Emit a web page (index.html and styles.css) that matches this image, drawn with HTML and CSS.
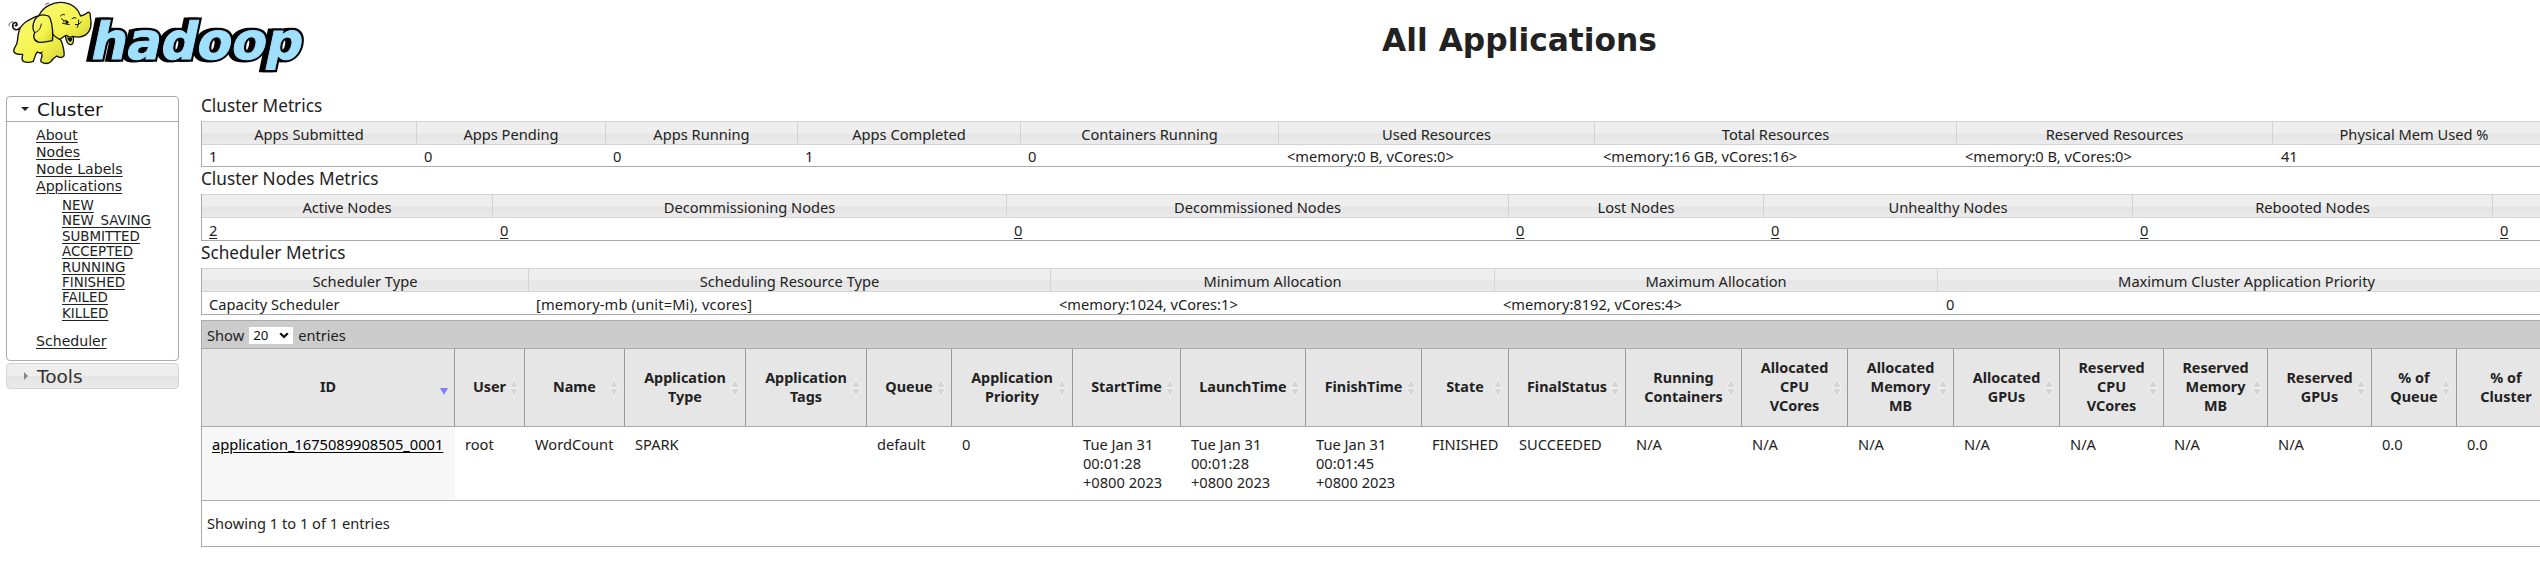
FILE: index.html
```html
<!DOCTYPE html>
<html lang="en">
<head>
<meta charset="utf-8">
<title>All Applications</title>
<link rel="stylesheet" href="styles.css">
</head>
<body>
<svg class="defs" width="0" height="0">
  <symbol id="sort" viewBox="0 0 10 18">
    <path d="M5 .7 9.3 8.3H.7zM5 17.3 9.3 9.7H.7z" fill="#d4d4d4" stroke="#fafafa" stroke-width=".9" stroke-dasharray="1.4 .5"/>
  </symbol>
</svg>
<header class="header">
  <svg class="logo" width="320" height="80" viewBox="0 0 320 80" role="img" aria-label="hadoop">
    <defs>
      <linearGradient id="skin" x1="0" y1="0" x2="1" y2="1">
        <stop offset="0" stop-color="#fafa78"/><stop offset=".6" stop-color="#f4f44c"/><stop offset="1" stop-color="#d2d034"/>
      </linearGradient>
    </defs>
    <g class="wordmark" transform="translate(89 58.5) skewX(-12)">
      <g class="wordmark-shadow">
        <text x="-4" y="0" textLength="211" lengthAdjust="spacingAndGlyphs">hadoop</text>
        <text x="0" y="0" textLength="211" lengthAdjust="spacingAndGlyphs">hadoop</text>
      </g>
      <text class="wordmark-face" x="0" y="0" textLength="211" lengthAdjust="spacingAndGlyphs">hadoop</text>
    </g>
    <g transform="scale(.3333)" stroke="#111" stroke-width="4" stroke-linejoin="round" stroke-linecap="round" fill="none">
      <path d="M60 84C50 94 38 88 38 77C38 68 46 65 50 70C53 75 49 79 46 76" stroke-width="5"/>
      <path d="M27 77Q25 70 31 68M33 67l5-2M136 15Q138 8 146 9" stroke-width="2"/>
      <path fill="url(#skin)" d="M112 48C90 58 66 68 58 90C52 108 54 122 50 132C46 142 38 148 42 156C48 164 58 164 68 163C68 172 62 178 70 184C80 188 92 187 100 184C104 174 106 162 112 156C120 160 124 158 126 164C128 174 118 180 124 186C134 192 146 190 152 186C156 178 164 172 170 168C178 174 188 174 192 168C194 156 190 142 186 128L150 60Z"/>
      <path fill="url(#skin)" d="M196 106C198 122 204 135 214 134C222 130 222 116 218 106Z"/>
      <path fill="url(#skin)" d="M116 48C128 20 160 4 192 8C220 12 236 30 242 48C250 46 258 42 262 38C268 34 272 40 271 50C276 74 274 92 258 104C246 112 232 113 218 109C212 112 204 111 200 106C192 106 188 116 178 118C170 112 158 108 156 96Z"/>
      <path fill="#111" d="M202 114Q212 112 216 114Q218 122 210 126Q204 122 202 114Z" stroke-width="1"/>
      <path fill="url(#skin)" d="M138 46C126 42 110 46 104 60C98 74 96 88 104 98C98 110 102 124 118 127C136 128 148 122 157 122C160 108 158 74 150 54Q146 46 138 46Z"/>
      <path d="M104 98C114 96 122 86 124 72M128 156Q120 162 112 157M190 66Q198 54 204 68M188 70L208 74M192 62L184 56M181 48Q186 40 194 44M216 56Q222 50 228 54M226 74Q236 78 244 66M232 82Q238 74 236 60" stroke-width="3"/>
      <path d="M196 66Q202 58 206 68L200 72Z" fill="#111" stroke-width="1"/>
    </g>
  </svg>
  <h1 class="title">All Applications</h1>
</header>
<div class="layout">
  <nav class="sidebar">
    <section class="panel open">
      <h3 class="panel-head"><i class="arrow-down"></i>Cluster</h3>
      <ul class="links">
        <li><a>About</a></li>
        <li><a>Nodes</a></li>
        <li><a>Node Labels</a></li>
        <li><a>Applications</a>
          <ul class="sublinks">
            <li><a>NEW</a></li>
            <li><a>NEW_SAVING</a></li>
            <li><a>SUBMITTED</a></li>
            <li><a>ACCEPTED</a></li>
            <li><a>RUNNING</a></li>
            <li><a>FINISHED</a></li>
            <li><a>FAILED</a></li>
            <li><a>KILLED</a></li>
          </ul>
        </li>
        <li><a>Scheduler</a></li>
      </ul>
    </section>
    <section class="panel closed">
      <h3 class="panel-head"><i class="arrow-right"></i>Tools</h3>
    </section>
  </nav>
  <main class="content">
    <h2 class="section">Cluster Metrics</h2>
    <div class="metrics cluster">
      <div class="head"><span>Apps Submitted</span><span>Apps Pending</span><span>Apps Running</span><span>Apps Completed</span><span>Containers Running</span><span>Used Resources</span><span>Total Resources</span><span>Reserved Resources</span><span>Physical Mem Used %</span></div>
      <div class="vals"><span>1</span><span>0</span><span>0</span><span>1</span><span>0</span><span>&lt;memory:0 B, vCores:0&gt;</span><span>&lt;memory:16 GB, vCores:16&gt;</span><span>&lt;memory:0 B, vCores:0&gt;</span><span>41</span></div>
    </div>
    <h2 class="section">Cluster Nodes Metrics</h2>
    <div class="metrics nodes">
      <div class="head"><span>Active Nodes</span><span>Decommissioning Nodes</span><span>Decommissioned Nodes</span><span>Lost Nodes</span><span>Unhealthy Nodes</span><span>Rebooted Nodes</span><span></span></div>
      <div class="vals"><a>2</a><a>0</a><a>0</a><a>0</a><a>0</a><a>0</a><a>0</a></div>
    </div>
    <h2 class="section">Scheduler Metrics</h2>
    <div class="metrics scheduler">
      <div class="head"><span>Scheduler Type</span><span>Scheduling Resource Type</span><span>Minimum Allocation</span><span>Maximum Allocation</span><span>Maximum Cluster Application Priority</span></div>
      <div class="vals"><span>Capacity Scheduler</span><span class="wide">[memory-mb (unit=Mi), vcores]</span><span>&lt;memory:1024, vCores:1&gt;</span><span>&lt;memory:8192, vCores:4&gt;</span><span>0</span></div>
    </div>
    <div class="apps">
      <div class="toolbar">Show <span class="select">20<svg width="10" height="7" viewBox="0 0 10 7"><path d="M1.2 1.2 5 5 8.8 1.2" fill="none" stroke="#111" stroke-width="2.2"/></svg></span> entries</div>
      <div class="app-head">
        <div>ID<i class="sorted"></i></div>
        <div>User<svg class="sort"><use href="#sort"/></svg></div>
        <div>Name<svg class="sort"><use href="#sort"/></svg></div>
        <div>Application<br>Type<svg class="sort"><use href="#sort"/></svg></div>
        <div>Application<br>Tags<svg class="sort"><use href="#sort"/></svg></div>
        <div>Queue<svg class="sort"><use href="#sort"/></svg></div>
        <div>Application<br>Priority<svg class="sort"><use href="#sort"/></svg></div>
        <div>StartTime<svg class="sort"><use href="#sort"/></svg></div>
        <div>LaunchTime<svg class="sort"><use href="#sort"/></svg></div>
        <div>FinishTime<svg class="sort"><use href="#sort"/></svg></div>
        <div>State<svg class="sort"><use href="#sort"/></svg></div>
        <div>FinalStatus<svg class="sort"><use href="#sort"/></svg></div>
        <div>Running<br>Containers<svg class="sort"><use href="#sort"/></svg></div>
        <div>Allocated<br>CPU<br>VCores<svg class="sort"><use href="#sort"/></svg></div>
        <div>Allocated<br>Memory<br>MB<svg class="sort"><use href="#sort"/></svg></div>
        <div>Allocated<br>GPUs<svg class="sort"><use href="#sort"/></svg></div>
        <div>Reserved<br>CPU<br>VCores<svg class="sort"><use href="#sort"/></svg></div>
        <div>Reserved<br>Memory<br>MB<svg class="sort"><use href="#sort"/></svg></div>
        <div>Reserved<br>GPUs<svg class="sort"><use href="#sort"/></svg></div>
        <div>% of<br>Queue<svg class="sort"><use href="#sort"/></svg></div>
        <div>% of<br>Cluster<svg class="sort"><use href="#sort"/></svg></div>
      </div>
      <div class="app-row">
        <div><a>application_1675089908505_0001</a></div>
        <div>root</div>
        <div>WordCount</div>
        <div>SPARK</div>
        <div></div>
        <div>default</div>
        <div>0</div>
        <div>Tue Jan 31<br>00:01:28<br>+0800 2023</div>
        <div>Tue Jan 31<br>00:01:28<br>+0800 2023</div>
        <div>Tue Jan 31<br>00:01:45<br>+0800 2023</div>
        <div>FINISHED</div>
        <div>SUCCEEDED</div>
        <div>N/A</div>
        <div>N/A</div>
        <div>N/A</div>
        <div>N/A</div>
        <div>N/A</div>
        <div>N/A</div>
        <div>N/A</div>
        <div>0.0</div>
        <div>0.0</div>
      </div>
      <div class="info">Showing 1 to 1 of 1 entries</div>
    </div>
  </main>
</div>
</body>
</html>
```
FILE: styles.css
```css
* { box-sizing: border-box; }
html, body { height: 583px; overflow: hidden; }
body {
  margin: 0;
  background: #fff;
  color: #222;
  font: 14.65px/19px "Noto Sans", "Open Sans", sans-serif;
  white-space: nowrap;
}
.defs { display: block; }
a { color: inherit; text-decoration: underline; text-decoration-thickness: 1px; text-underline-offset: 2px; }
i { display: block; }

/* Page header */
.header { display: flex; height: 96px; }
.logo { display: block; flex: none; overflow: visible; }
.wordmark { font: bold 51px "DejaVu Sans", sans-serif; }
.wordmark-shadow { fill: #000; stroke: #000; stroke-width: 5.4px; }
.wordmark-face { fill: #9fdfff; stroke: #9fdfff; stroke-width: 1px; }
.title {
  flex: 1;
  margin: 0;
  padding: 21px 0 0 179px;
  text-align: center;
  font: bold 31.3px/38px "DejaVu Sans", sans-serif;
}

.layout { display: flex; align-items: flex-start; }

/* Sidebar accordion */
.sidebar { flex: none; width: 201px; padding-left: 6px; font: 14.1px/17px "DejaVu Sans", sans-serif; }
.panel { width: 173px; border: 1px solid #aaa; border-radius: 4px; }
.panel-head {
  display: flex;
  align-items: center;
  height: 25px;
  margin: 0;
  padding-left: 14px;
  gap: 8px;
  font-weight: 400;
  font-size: 18.5px;
  color: #111;
}
.open { height: 265px; }
.open .panel-head { border-bottom: 1px solid #aaa; }
.closed { margin-top: 2px; height: 26px; border-color: #d3d3d3; background: linear-gradient(#eee 50%, #e4e4e4 50%, #eaeaea); }
.closed .panel-head { height: 24px; color: #333; padding-left: 17px; gap: 9px; }
.arrow-down { width: 8px; border: 4px solid transparent; border-top-color: #222; border-bottom: 0; }
.arrow-right { width: 4px; border: 4px solid transparent; border-left-color: #888; border-right: 0; }
.links, .sublinks { margin: 0; padding: 0; list-style: none; }
.links { padding: 5px 0 0 29px; }
.sublinks { padding: 3px 0 12px 26px; font-size: 13.4px; line-height: 15.4px; }

/* Metrics tables */
.content { flex: none; width: 2355px; }
.section { height: 27px; margin: 0; font-size: 17.2px; line-height: 23px; font-weight: 400; }
.section:first-child { height: 25px; line-height: 20px; }
.metrics { border-left: 1px solid #aaa; border-bottom: 1px solid #aaa; }
.head, .vals { display: grid; }
.cluster .head, .cluster .vals { grid-template-columns: 215px 189px 192px 223px 258px 316px 362px 316px 283px; }
.nodes .head, .nodes .vals { grid-template-columns: 291px 514px 502px 255px 369px 360px 63px; }
.scheduler .head, .scheduler .vals { grid-template-columns: 327px 522px 444px 443px 618px; }
.head {
  height: 24px;
  border: solid #d3d3d3;
  border-width: 1px 0;
  background: linear-gradient(#eee 0 50%, #e5e5e5 55%, #eaeaea);
  text-align: center;
  line-height: 24px;
}
.head span { height: 22px; border-right: 1px solid #d3d3d3; }
.vals { height: 22px; line-height: 22px; padding-top: 1px; }
.cluster .vals { height: 21px; line-height: 22px; padding-top: 0; }
.vals > * { padding-left: 7px; justify-self: start; }
.vals > a { margin-left: 7px; padding-left: 0; }
.vals .wide { letter-spacing: .13px; }
.cluster .vals span:nth-child(n+6), .scheduler .vals span:nth-child(n+3) { padding-left: 8px; }

/* Applications table */
.apps { margin-top: 5px; border: solid #aaa; border-width: 1px 0 1px 1px; }
.toolbar {
  display: flex;
  align-items: center;
  gap: 5px;
  height: 28px;
  padding: 1px 0 0 5px;
  border-bottom: 1px solid #aaa;
  background: #ccc;
}
.select {
  display: flex;
  align-items: center;
  justify-content: space-between;
  width: 44px;
  height: 17px;
  padding: 0 4px;
  background: #fff;
  color: #111;
  font-size: 13.3px;
}
.app-head, .app-row {
  display: grid;
  grid-template-columns: 253px 70px 100px 121px 121px 85px 121px 108px 125px 116px 87px 117px 116px 106px 106px 106px 104px 104px 104px 85px 99px;
}
.app-head { height: 78px; border-bottom: 1px solid #aaa; font-weight: 700; font-size: 14.4px; text-align: center; }
.app-head > div {
  position: relative;
  display: grid;
  align-content: center;
  padding-bottom: 2px;
  background: #e6e6e6;
  border-right: 1px solid #999;
}
.sort { position: absolute; right: 5px; top: 30px; width: 10px; height: 18px; }
.sorted { position: absolute; right: 6px; top: 39px; border: 4px solid transparent; border-top: 7px solid #8080ff; border-bottom: 0; }
.app-row { height: 74px; border-bottom: 1px solid #aaa; }
.app-row > div { padding: 8px 0 0 10px; }
.app-row > div:first-child { background: #f7f7f7; color: #000; }
.info { height: 45px; padding: 13px 0 0 5px; }
```
